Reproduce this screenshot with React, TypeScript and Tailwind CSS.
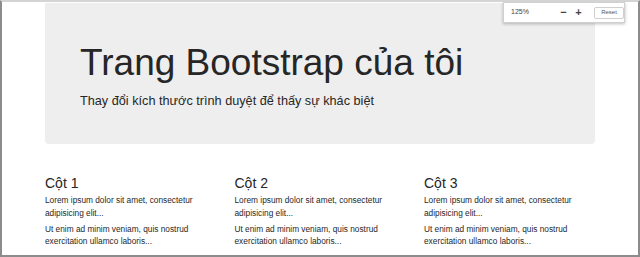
import React from 'react';

const COLUMNS = ['Cột 1', 'Cột 2', 'Cột 3'];

export default function App() {
  return (
    <div className="relative w-[640px] h-[257px] overflow-hidden bg-white border-l-2 border-r-2 border-b-2 border-t-2 border-[#8c8c8c] border-t-[#d4d4d4] font-['Liberation_Sans',Arial,sans-serif] text-[#262626]">
      {/* Jumbotron */}
      <div className="ml-[43px] mt-[1px] w-[550px] h-[141px] bg-[#eeeeee] rounded-b-[4px] pl-[35px] pt-[39px]">
        <h1 className="text-[37px] leading-[41px] font-normal">Trang Bootstrap của tôi</h1>
        <p className="mt-[9px] text-[12.7px] leading-[18px]">Thay đổi kích thước trình duyệt để thấy sự khác biệt</p>
      </div>

      {/* Columns */}
      <div className="ml-[43px] mt-[31px] flex">
        {COLUMNS.map((title) => (
          <div key={title} className="w-[189.5px] shrink-0 pr-[18px]">
            <h3 className="text-[14px] leading-[16px]">{title}</h3>
            <p className="mt-[3px] text-[8.3px] leading-[12.5px] text-[#1f1f1f]">Lorem ipsum dolor sit amet, consectetur adipisicing elit...</p>
            <p className="mt-[3.5px] text-[8.3px] leading-[12.5px] text-[#1f1f1f]">Ut enim ad minim veniam, quis nostrud exercitation ullamco laboris...</p>
          </div>
        ))}
      </div>

      {/* Zoom bubble */}
      <div className="absolute left-[501px] top-0 w-[122px] h-[21px] bg-white border border-[#d0d0d0] shadow-[0_1px_3px_rgba(0,0,0,0.25)] flex items-center pl-[7px] text-[7px] text-[#444]">
        <span className="w-[45px]">125%</span>
        <span className="w-[15px] text-[11px] leading-none text-center font-bold text-[#444]">−</span>
        <span className="w-[15px] text-[11px] leading-none text-center font-bold text-[#444]">+</span>
        <span className="ml-[8px] w-[30px] h-[12px] border border-[#cfcfcf] rounded-[2px] flex items-center justify-center text-[6px] text-[#555]">Reset</span>
      </div>
    </div>
  );
}
